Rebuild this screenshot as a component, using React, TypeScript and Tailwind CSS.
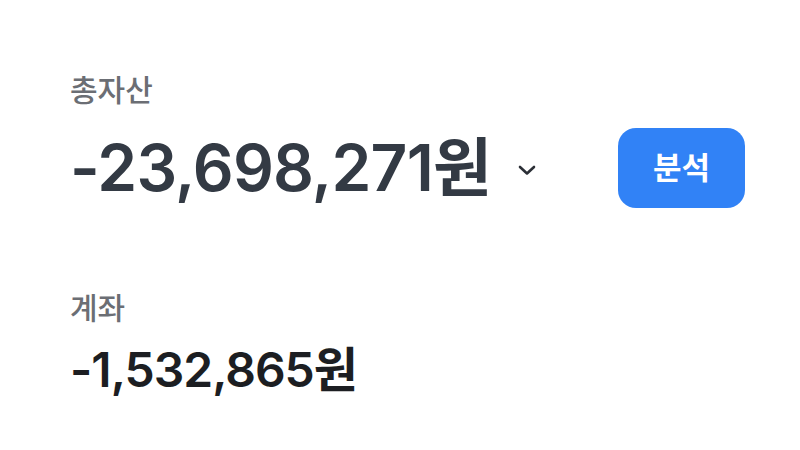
export default function App() {
  const font = { fontFamily: '"Inter", "Noto Sans CJK KR", sans-serif' }

  return (
    <div className="h-[450px] w-[800px] bg-white" style={font}>
      <div className="pl-[70px] pr-[55px] pt-[72px]">
        <p className="text-[30px] font-medium leading-[36px] text-[#6b6e74]">총자산</p>
        <div className="mt-[20px] flex h-[80px] items-center justify-between">
          <div className="flex items-center">
            <span className="text-[64px] font-semibold leading-none tracking-[-0.8px] text-[#333a44]">
              -23,698,271원
            </span>
            <svg
              className="ml-[26px] mt-[4px]"
              width="20"
              height="12"
              viewBox="0 0 20 12"
              fill="none"
              stroke="#2b2f36"
              strokeWidth="2.6"
              strokeLinecap="round"
              strokeLinejoin="round"
            >
              <path d="M3 3l7 6.5L17 3" />
            </svg>
          </div>
          <button className="flex h-[80px] w-[127px] items-center justify-center rounded-[18px] bg-[#3182f6] text-[31px] font-semibold text-white">
            분석
          </button>
        </div>
        <p className="mt-[82px] text-[30px] font-medium leading-[36px] text-[#6b6e74]">계좌</p>
        <p className="mt-[20px] text-[48px] font-semibold leading-none tracking-[-1px] text-[#1c1e22]">
          -1,532,865원
        </p>
      </div>
    </div>
  )
}
